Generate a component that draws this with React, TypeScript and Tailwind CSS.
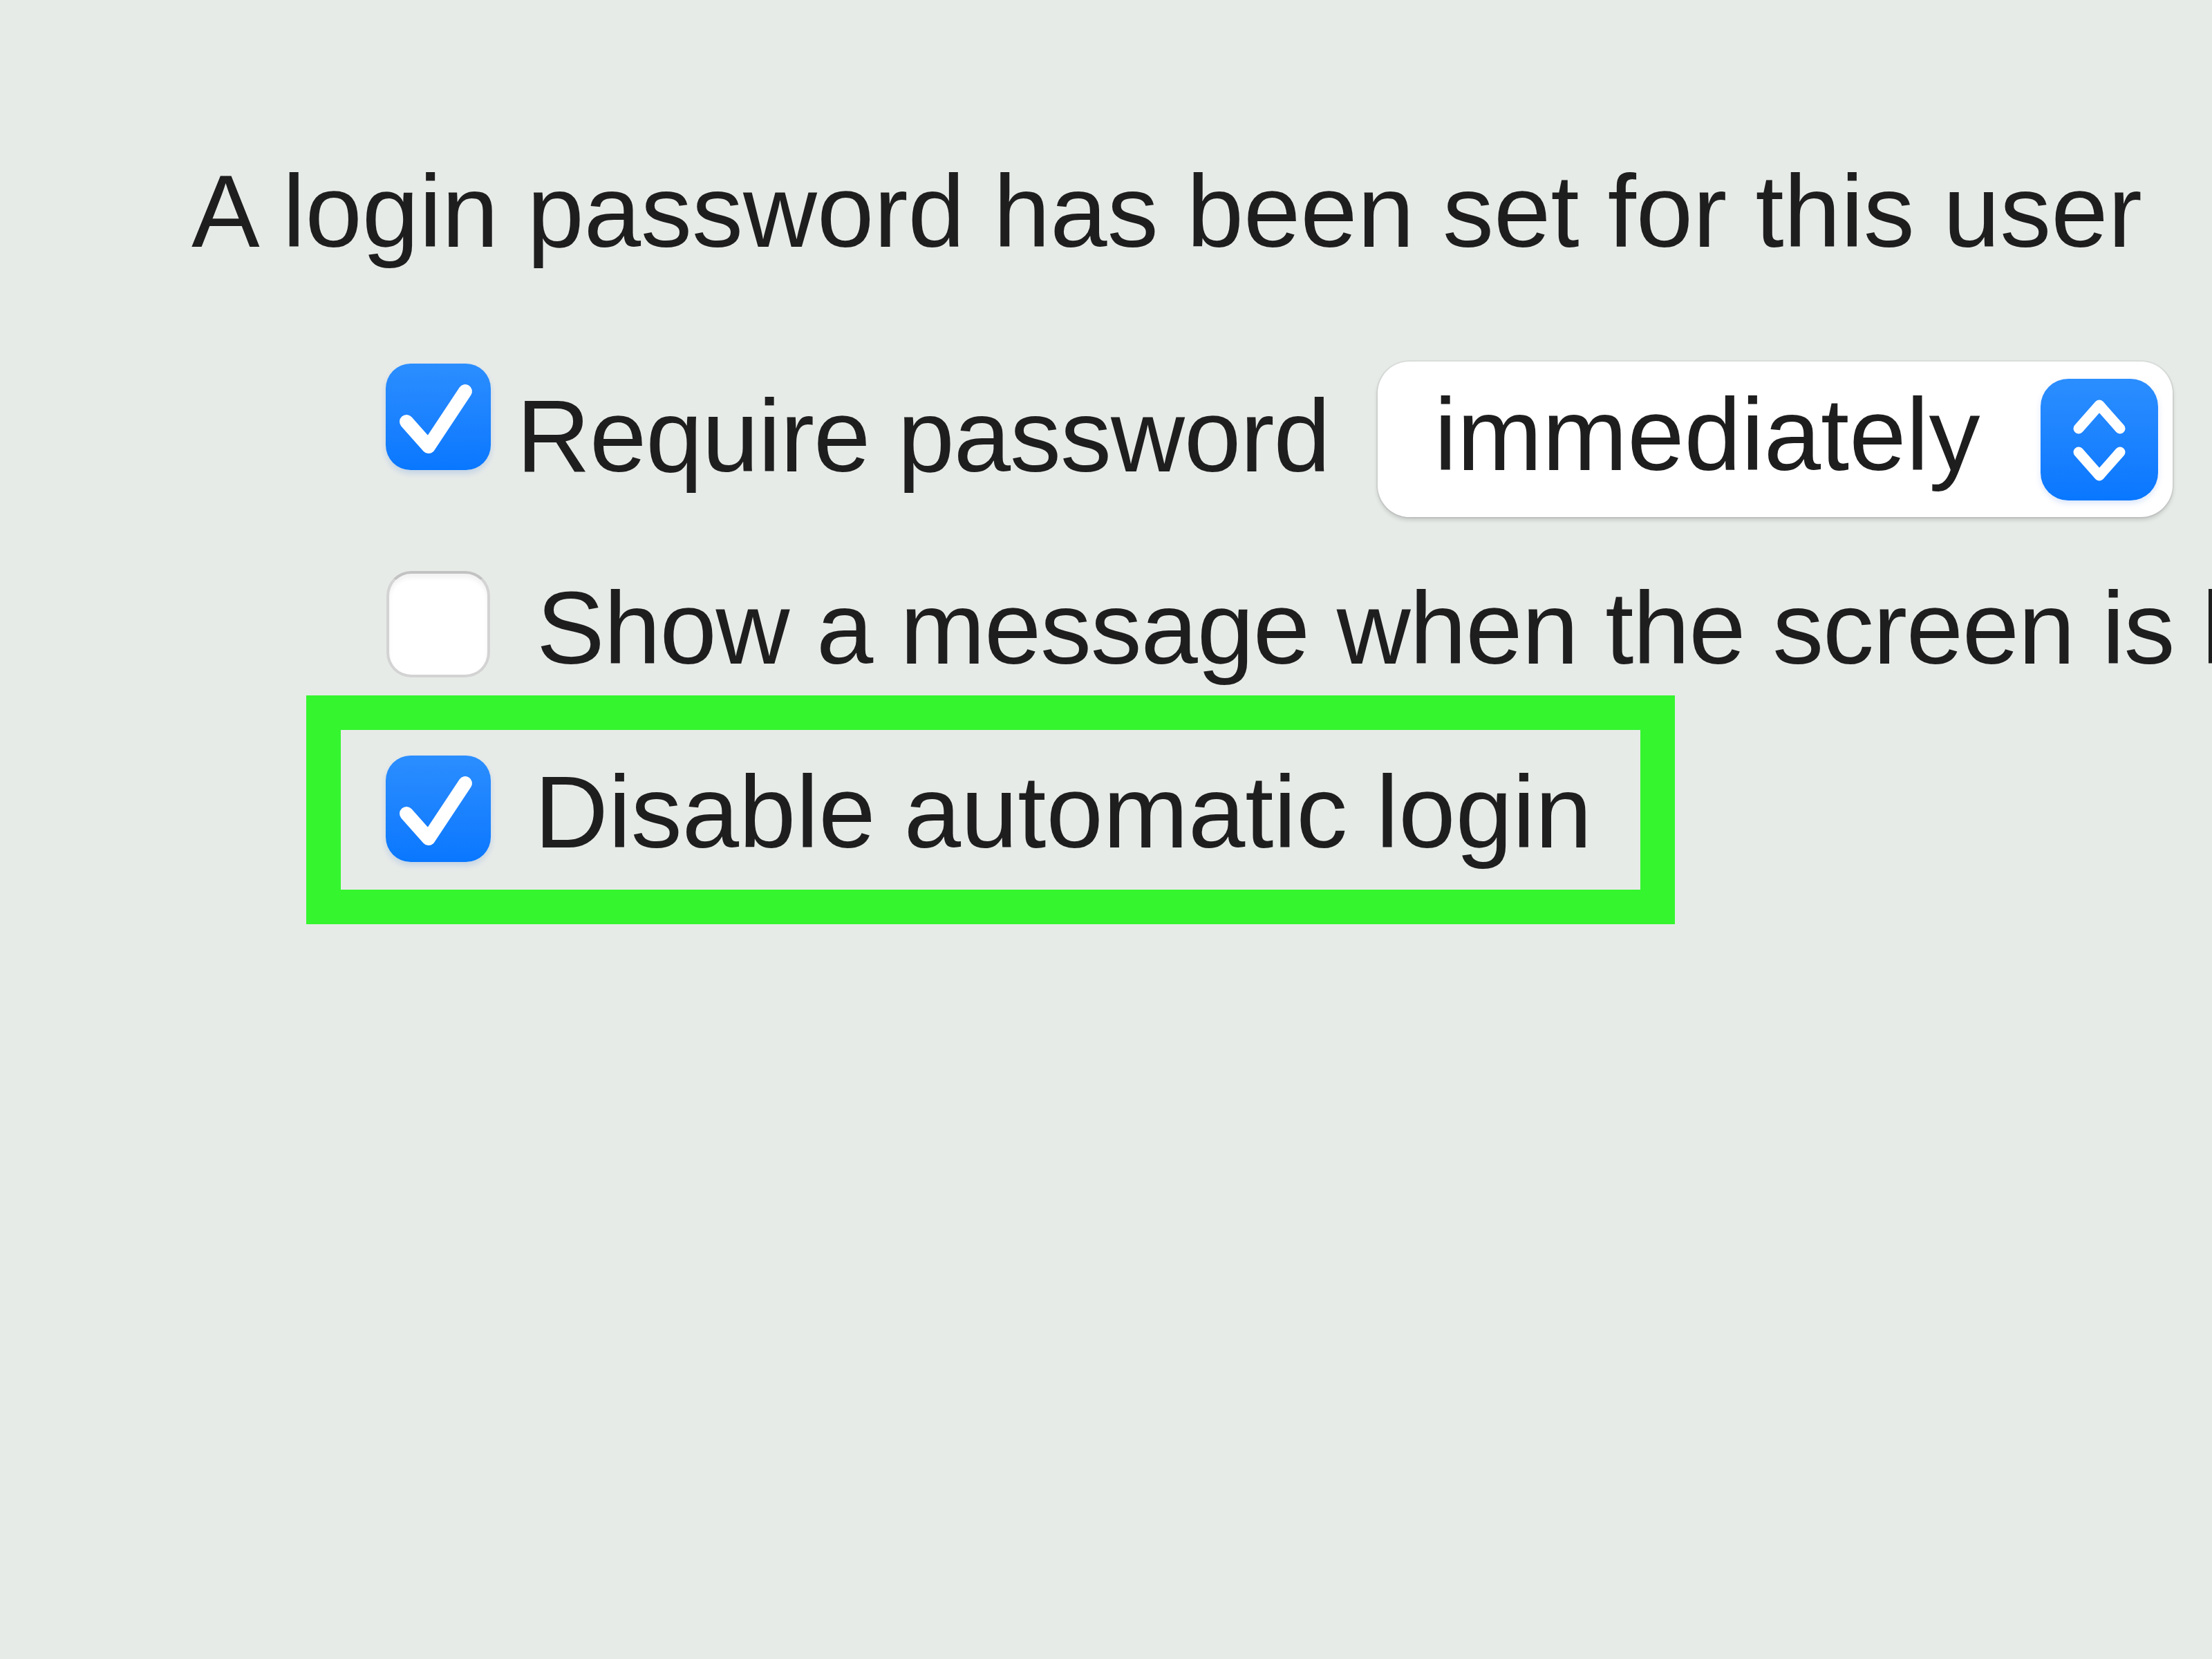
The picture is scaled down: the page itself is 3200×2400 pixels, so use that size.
import React from "react";

function CheckedBox() {
  return (
    <div className="w-[152px] h-[154px] shrink-0 rounded-[36px] bg-linear-to-b from-[#2b8eff] to-[#0877ff] shadow-[0_5px_9px_rgba(0,90,220,0.16)]">
      <svg viewBox="0 0 152 154" className="w-full h-full block">
        <path
          d="M30 84 L62 120 L115 40"
          fill="none"
          stroke="white"
          strokeWidth="20"
          strokeLinecap="round"
          strokeLinejoin="round"
        />
      </svg>
    </div>
  );
}

function UncheckedBox() {
  return (
    <div className="w-[150px] h-[154px] shrink-0 rounded-[36px] bg-white border-[4px] border-[#d3d3d3] border-t-[#c2c2c2] shadow-[inset_0_6px_6px_rgba(0,0,0,0.05)]" />
  );
}

export default function App() {
  return (
    <div className="w-[3200px] h-[2400px] overflow-hidden bg-[#e7ebe8] text-[#1e1e1e] font-['Liberation_Sans',Arial,sans-serif] text-[148px] leading-[148px]">
      <div className="pt-[232px] pl-[277px] whitespace-nowrap">
        A login password has been set for this user
      </div>

      <div className="mt-[143px] ml-[558px] flex items-start">
        <div className="mt-[3px] shrink-0">
          <CheckedBox />
        </div>
        <div className="mt-[34px] ml-[37px] whitespace-nowrap shrink-0 tracking-[-1px]">Require password</div>
        <div className="ml-[69px] w-[1150px] h-[225px] shrink-0 rounded-[46px] bg-white shadow-[0_0_0_2px_rgba(0,0,0,0.05),0_4px_6px_rgba(0,0,0,0.16)] flex items-start justify-between pl-[82px] pr-[21px]">
          <span className="mt-[32px] whitespace-nowrap">immediately</span>
          <div className="mt-[25px] w-[170px] h-[176px] shrink-0 rounded-[40px] bg-linear-to-b from-[#2b8eff] to-[#0877ff] shadow-[0_4px_8px_rgba(0,90,220,0.15)]">
            <svg viewBox="0 0 170 176" className="w-full h-full block">
              <path
                d="M55 72 L85 38 L115 72"
                fill="none"
                stroke="white"
                strokeWidth="15"
                strokeLinecap="round"
                strokeLinejoin="round"
              />
              <path
                d="M55 106 L85 140 L115 106"
                fill="none"
                stroke="white"
                strokeWidth="15"
                strokeLinecap="round"
                strokeLinejoin="round"
              />
            </svg>
          </div>
        </div>
      </div>

      <div className="mt-[78px] ml-[559px] h-[160px] flex items-start">
        <UncheckedBox />
        <div className="mt-[9px] ml-[67px] whitespace-nowrap tracking-[-1.25px]">
          Show a message when the screen is locked
        </div>
      </div>

      <div className="mt-[20px] ml-[443px] w-[1980px] h-[331px] border-[50px] border-[#35f52f] pl-[65px] pt-[37px] flex items-start">
        <CheckedBox />
        <div className="mt-[8px] ml-[63px] whitespace-nowrap">Disable automatic login</div>
      </div>
    </div>
  );
}
